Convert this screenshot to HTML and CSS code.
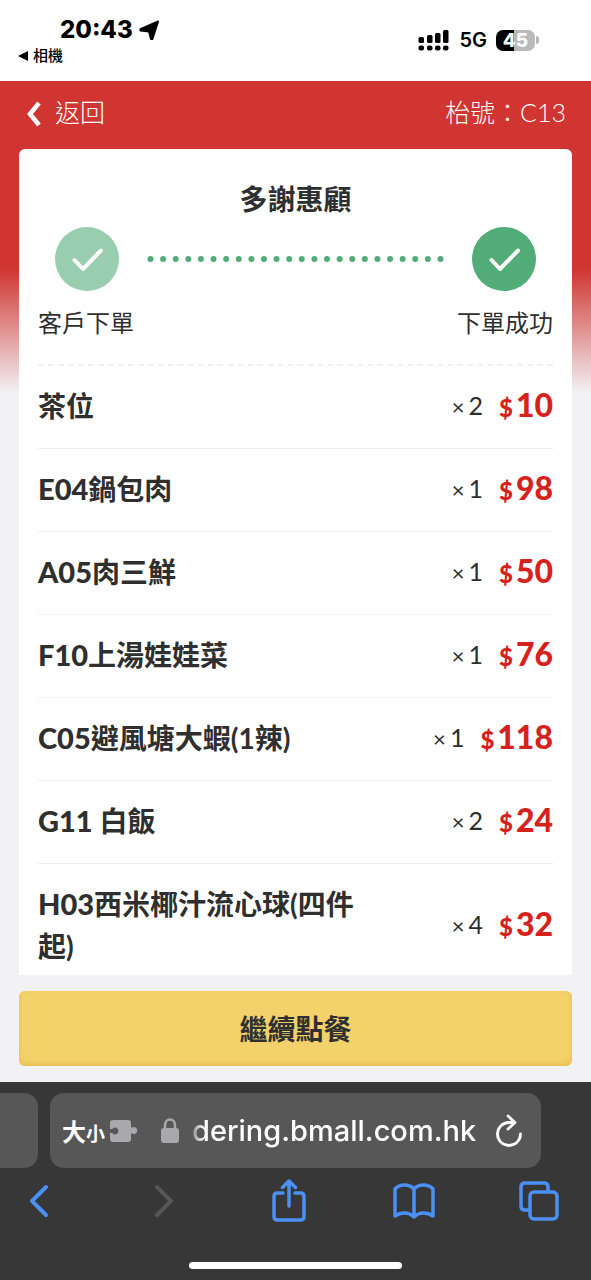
FILE: index.html
```html
<!DOCTYPE html>
<html lang="zh-Hant">
<head>
<meta charset="utf-8">
<meta name="viewport" content="width=device-width, initial-scale=1">
<title>多謝惠顧</title>
<link rel="stylesheet" href="styles.css">
</head>
<body>
<div class="screen">
  <header class="status">
    <div class="status-left">
      <div class="clock">20:43
        <svg class="location" viewBox="0 0 22 22" aria-hidden="true"><path d="M20 1.500 1.500 9.500V11L10.500 12 12.500 20H14Z" fill="#000" stroke="#000" stroke-width="2" stroke-linejoin="round"/></svg>
      </div>
      <a class="back-app" href="#"><svg viewBox="0 0 10 10" aria-hidden="true"><path d="M0 5 10 0V10Z" fill="#000"/></svg>相機</a>
    </div>
    <div class="status-right">
      <svg class="signal" viewBox="0 0 32 21" aria-hidden="true"><g fill="#000"><rect x="0.500" y="7" width="5.500" height="6" rx="1.500"/><rect x="9" y="5" width="5.500" height="8" rx="1.500"/><rect x="17" y="3" width="5.500" height="10" rx="1.500"/><rect x="25" y="0" width="5.500" height="13" rx="1.500"/><rect x="0.500" y="15.500" width="5.500" height="5" rx="2"/><rect x="9" y="15.500" width="5.500" height="5" rx="2"/><rect x="17" y="15.500" width="5.500" height="5" rx="2"/><rect x="25" y="15.500" width="5.500" height="5" rx="2"/></g></svg>
      <span class="network">5G</span>
      <span class="battery"><span class="battery-body">45</span><span class="battery-tip"></span></span>
    </div>
  </header>

  <main class="page">
    <nav class="topbar">
      <a class="back" href="#"><svg viewBox="0 0 14 26" aria-hidden="true"><path d="M12 2 3 13l9 11" fill="none" stroke="#fff" stroke-width="4.500"/></svg>返回</a>
      <span>枱號：C13</span>
    </nav>

    <section class="card">
      <h1 class="title">多謝惠顧</h1>
      <div class="progress">
        <svg class="tick tick-soft" viewBox="0 0 64 64" aria-hidden="true"><circle cx="32" cy="32" r="32"/><path d="M19.500 33 28 42 46 23.500"/></svg>
        <svg class="dots" viewBox="0 0 296 6" aria-hidden="true"><path d="M3 3H293.100"/></svg>
        <svg class="tick" viewBox="0 0 64 64" aria-hidden="true"><circle cx="32" cy="32" r="32"/><path d="M19.500 33 28 42 46 23.500"/></svg>
      </div>
      <div class="labels"><span>客戶下單</span><span>下單成功</span></div>
      <ul class="items">
        <li><span class="name">茶位</span><span class="qty"><i>×</i>2</span><span class="price"><small>$</small>10</span></li>
        <li><span class="name"><b>E04</b>鍋包肉</span><span class="qty"><i>×</i>1</span><span class="price"><small>$</small>98</span></li>
        <li><span class="name"><b>A05</b>肉三鮮</span><span class="qty"><i>×</i>1</span><span class="price"><small>$</small>50</span></li>
        <li><span class="name"><b>F10</b>上湯娃娃菜</span><span class="qty"><i>×</i>1</span><span class="price"><small>$</small>76</span></li>
        <li><span class="name"><b>C05</b>避風塘大蝦(1辣)</span><span class="qty"><i>×</i>1</span><span class="price"><small>$</small>118</span></li>
        <li><span class="name"><b>G11</b> 白飯</span><span class="qty"><i>×</i>2</span><span class="price"><small>$</small>24</span></li>
        <li><span class="name"><b>H03</b>西米椰汁流心球(四件起)</span><span class="qty"><i>×</i>4</span><span class="price"><small>$</small>32</span></li>
      </ul>
    </section>
    <button class="order" type="button">繼續點餐</button>
  </main>

  <footer class="browser">
    <div class="tabs">
      <div class="tab-prev"></div>
      <div class="address">
        <button class="text-size" type="button">大<small>小</small></button>
        <svg class="puzzle" viewBox="0 0 28 24" aria-hidden="true"><path fill="#a9a9ad" d="M3 1H18Q21 1 21 4V8.500H22.300A3.400 3.400 0 1 1 22.300 14.500H21V20Q21 23 18 23H3Q0 23 0 20V14H2.300A3.400 3.400 0 1 0 2.300 10H0V4Q0 1 3 1Z"/></svg>
        <svg class="lock" viewBox="0 0 18 25" aria-hidden="true"><rect x="0" y="10" width="18" height="15" rx="3" fill="#a9a9ad"/><path d="M4 11V7a5 5.500 0 0 1 10 0v4" fill="none" stroke="#a9a9ad" stroke-width="2.500"/></svg>
        <span class="url">dering.bmall.com.hk</span>
        <button class="reload" type="button" aria-label="重新載入"><svg viewBox="0 0 28 34" aria-hidden="true"><path d="M19 8.500H14A11.500 11.500 0 1 0 25.500 20M13 2l7 6.500-7 6.500" fill="none" stroke="#fff" stroke-width="2.800" stroke-linecap="round" stroke-linejoin="round"/></svg></button>
      </div>
    </div>
    <nav class="tools">
      <button type="button" aria-label="上一頁"><svg width="20" height="34" viewBox="0 0 20 34"><path d="M17 3 3 17l14 14"/></svg></button>
      <button class="off" type="button" aria-label="下一頁" disabled><svg width="20" height="34" viewBox="0 0 20 34"><path d="m3 3 14 14L3 31"/></svg></button>
      <button type="button" aria-label="分享"><svg class="thin" width="34" height="44" viewBox="0 0 34 44"><path d="M11 14H5.500Q2 14 2 17.500V37.500Q2 41 5.500 41H28.500Q32 41 32 37.500V17.500Q32 14 28.500 14H23M17 27V2M10.500 8.500 17 2l6.500 6.500"/></svg></button>
      <button type="button" aria-label="書籤"><svg class="thin" width="42" height="36" viewBox="0 0 42 36"><path d="M21 34V6Q17.500 2 11.500 2T2 6V33Q6 30 11.500 30T21 34Q25 30 30.500 30T40 33V6Q36.500 2 30.500 2T21 6"/></svg></button>
      <button type="button" aria-label="分頁"><svg class="thin" width="40" height="40" viewBox="0 0 40 40"><rect x="11" y="11" width="27" height="27" rx="4"/><path d="M11 29H6Q2 29 2 25V6Q2 2 6 2H25Q29 2 29 6V11"/></svg></button>
    </nav>
    <div class="home"></div>
  </footer>
</div>
</body>
</html>
```
FILE: styles.css
```css
* { box-sizing: border-box; }

body {
  margin: 0;
  font-family: Lato, "Noto Sans CJK TC", sans-serif;
  color: #2f2f2f;
  background: #f2f2f5;
}

button {
  margin: 0;
  padding: 0;
  border: 0;
  background: none;
  font: inherit;
  color: inherit;
}

a { color: inherit; text-decoration: none; }
svg { display: block; flex: none; }

.screen {
  min-height: 100vh;
  display: flex;
  flex-direction: column;
}

/* Status bar */
.status {
  height: 81px;
  padding: 15px 52px 0 18px;
  display: flex;
  justify-content: space-between;
  background: #fff;
  color: #000;
  font-family: Inter, "Noto Sans CJK TC", sans-serif;
}

.clock {
  display: flex;
  align-items: center;
  gap: 6px;
  padding-left: 42px;
  font-size: 24px;
  font-weight: 800;
  line-height: 30px;
}

.location { width: 21px; height: 21px; }

.back-app {
  display: flex;
  align-items: center;
  gap: 5px;
  font-size: 15px;
  font-weight: 500;
  line-height: 22px;
}

.back-app svg { width: 10px; height: 10px; }

.status-right {
  display: flex;
  align-items: center;
  gap: 9px;
  height: 50px;
}

.signal { width: 32px; height: 21px; }
.network { font-size: 20px; font-weight: 600; }
.battery { display: flex; align-items: center; gap: 1px; }

.battery-body {
  width: 39px;
  height: 21px;
  border-radius: 7px;
  background: linear-gradient(90deg, #000 45%, #b9b9b9 45%);
  color: #fff;
  font-size: 19px;
  font-weight: 800;
  line-height: 21px;
  text-align: center;
}

.battery-tip {
  width: 3px;
  height: 8px;
  border-radius: 0 3px 3px 0;
  background: #b9b9b9;
}

/* Order page */
.page {
  flex: 1;
  display: flex;
  flex-direction: column;
  padding: 0 19px 16px;
  background: linear-gradient(#d03531 0, #d03531 188px, #f2f2f5 312px);
}

.topbar {
  height: 68px;
  padding: 0 6px 8px 8px;
  display: flex;
  align-items: center;
  justify-content: space-between;
  color: #fff;
  font-size: 25px;
  font-weight: 300;
}

.back { display: flex; align-items: center; gap: 14px; }
.back svg { width: 14px; height: 26px; margin-top: 6px; }

.card {
  flex: 1;
  padding: 30px 19px 0;
  border-radius: 6px 6px 0 0;
  background: #fff;
}

.title {
  margin: 0;
  font-size: 28px;
  font-weight: 700;
  line-height: 40px;
  text-align: center;
}

.progress {
  display: flex;
  align-items: center;
  justify-content: space-between;
  gap: 28px;
  padding: 8px 17px 0;
}

.tick { width: 64px; height: 64px; fill: #52ac78; }
.tick-soft { fill: #98cdb0; }

.tick path {
  fill: none;
  stroke: #fff;
  stroke-width: 4;
  stroke-linecap: round;
  stroke-linejoin: round;
}

.dots { flex: 1; min-width: 0; height: 6px; }

.dots path {
  stroke: #52ac78;
  stroke-width: 6;
  stroke-linecap: round;
  stroke-dasharray: 0 12.608;
}

.labels {
  display: flex;
  justify-content: space-between;
  padding: 14px 0 23px;
  border-bottom: 2px dashed #f1f1f1;
  font-size: 24px;
  font-weight: 400;
  line-height: 36px;
}

.items { margin: 0; padding: 0; list-style: none; }

.items li {
  display: flex;
  align-items: center;
  min-height: 83px;
  padding: 12px 0 14px;
  border-bottom: 1px solid #f0f0f0;
  line-height: 42px;
}

.items li:last-child {
  padding: 19px 0 8px;
  border-bottom: 0;
}

.name {
  width: 64%;
  margin-right: auto;
  font-size: 28px;
  font-weight: 700;
}

.name b { font-size: 29px; font-weight: 900; line-height: 1; }

.qty { font-size: 25px; font-weight: 400; white-space: nowrap; }
.qty i { margin-right: 4px; font-size: 22px; font-style: normal; }

.price {
  margin-left: 16px;
  color: #d6221c;
  font-size: 32px;
  font-weight: 900;
  white-space: nowrap;
}

.price small { margin-right: 3px; font-size: 24px; }

.order {
  height: 75px;
  margin-top: 16px;
  border-radius: 6px;
  background: #f4d26b;
  box-shadow: inset 0 -2px 6px #e9be52;
  font-size: 28px;
  font-weight: 700;
  line-height: 40px;
}

/* Browser chrome */
.browser {
  height: 198px;
  display: flex;
  flex-direction: column;
  background: #373737;
}

.tabs { display: flex; gap: 12px; padding: 11px 50px 0 0; }
.tab-prev { width: 38px; height: 75px; border-radius: 0 14px 14px 0; background: #575757; }

.address {
  flex: 1;
  height: 75px;
  padding: 0 18px 0 12px;
  display: flex;
  align-items: center;
  border-radius: 14px;
  background: #575757;
  color: #fff;
  font-family: "Liberation Sans", "Noto Sans CJK TC", sans-serif;
}

.text-size { font-size: 24px; font-weight: 700; }
.text-size small { font-size: 19px; }
.puzzle { width: 28px; height: 24px; margin-left: 5px; }
.lock { width: 18px; height: 25px; margin-left: 23px; }

.url {
  flex: 1;
  margin-left: 13px;
  font-family: Inter, sans-serif;
  font-size: 29px;
  font-weight: 500;
  white-space: nowrap;
  mask-image: linear-gradient(90deg, rgba(0, 0, 0, 0.3), #000 12px);
}

.reload svg { width: 28px; height: 34px; }

.tools {
  display: flex;
  align-items: center;
  justify-content: space-between;
  height: 66px;
  padding: 0 22px 0 9px;
}

.tools button {
  width: 60px;
  display: flex;
  justify-content: center;
}

.tools svg {
  fill: none;
  stroke: #4a90f5;
  stroke-width: 4;
  stroke-linecap: round;
  stroke-linejoin: round;
}

.tools .thin { stroke-width: 3.500px; }
.tools .off svg { stroke: #575757; }

.home {
  width: 36%;
  height: 7px;
  margin: auto auto 11px;
  border-radius: 4px;
  background: #fff;
}
```
